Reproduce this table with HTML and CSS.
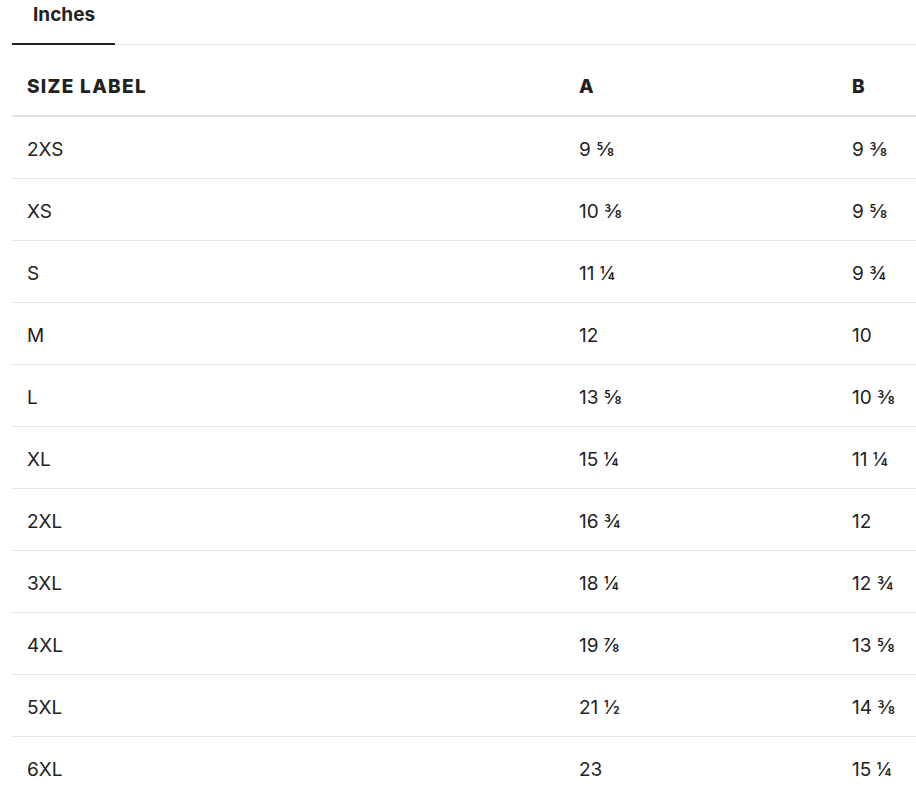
FILE: index.html
```html
<!DOCTYPE html>
<html>
<head>
<meta charset="utf-8">
<link rel="stylesheet" href="styles.css">
</head>
<body>
<div class="wrap">
  <div class="tabs">
    <div class="tab active">Inches</div>
  </div>
  <table class="size-table">
    <thead>
      <tr><th class="c1">SIZE LABEL</th><th class="c2">A</th><th class="c3">B</th></tr>
    </thead>
    <tbody>
      <tr><td>2XS</td><td>9 ⅝</td><td>9 ⅜</td></tr>
      <tr><td>XS</td><td>10 ⅜</td><td>9 ⅝</td></tr>
      <tr><td>S</td><td>11 ¼</td><td>9 ¾</td></tr>
      <tr><td>M</td><td>12</td><td>10</td></tr>
      <tr><td>L</td><td>13 ⅝</td><td>10 ⅜</td></tr>
      <tr><td>XL</td><td>15 ¼</td><td>11 ¼</td></tr>
      <tr><td>2XL</td><td>16 ¾</td><td>12</td></tr>
      <tr><td>3XL</td><td>18 ¼</td><td>12 ¾</td></tr>
      <tr><td>4XL</td><td>19 ⅞</td><td>13 ⅝</td></tr>
      <tr><td>5XL</td><td>21 ½</td><td>14 ⅜</td></tr>
      <tr><td>6XL</td><td>23</td><td>15 ¼</td></tr>
    </tbody>
  </table>
</div>
</body>
</html>
```
FILE: styles.css
```css
html, body {
  margin: 0;
  padding: 0;
  background: #fff;
}
body {
  font-family: Inter, "Open Sans", Arial, sans-serif;
  color: #222;
}
.wrap {
  padding-left: 12px;
}
.tabs {
  display: flex;
  border-bottom: 1px solid #e6e6e6;
  height: 44px;
}
.tab {
  width: 103px;
  box-sizing: border-box;
  padding-left: 21px;
  padding-top: 1px;
  font-size: 19px;
  font-weight: 700;
  line-height: 28px;
  height: 45px;
  border-bottom: 2px solid #222;
}
.size-table {
  width: 100%;
  border-collapse: collapse;
  font-size: 19px;
}
.size-table th {
  text-align: left;
  font-weight: 800;
  letter-spacing: 1.3px;
  height: 58px;
  padding: 12px 15px 0;
  border-bottom: 2px solid #e3e3e3;
  box-sizing: content-box;
}
.size-table td {
  height: 58px;
  padding: 3px 15px 0;
  border-bottom: 1px solid #e6e6e6;
}
.c1 { width: 522px; }
.c2 { width: 243px; }
```
